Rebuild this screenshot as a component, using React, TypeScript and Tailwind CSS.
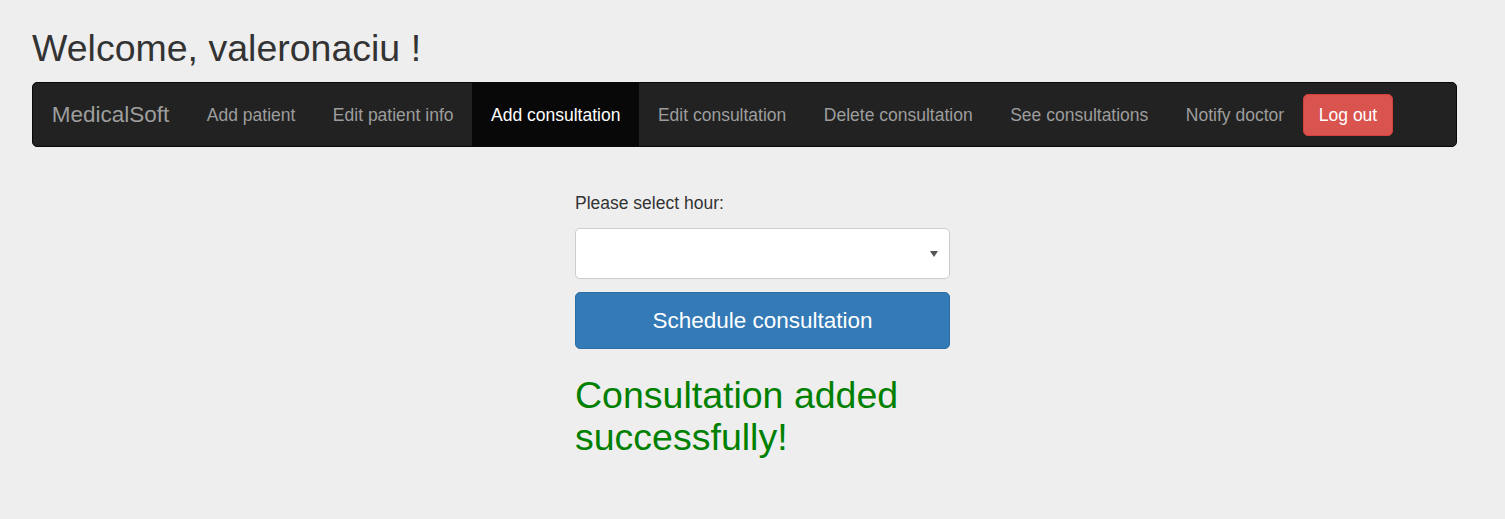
export default function App() {
  const links = [
    "Add patient",
    "Edit patient info",
    "Add consultation",
    "Edit consultation",
    "Delete consultation",
    "See consultations",
    "Notify doctor",
  ];

  return (
    <div className="min-h-screen bg-[#eeeeee] font-['Liberation_Sans',Arial,sans-serif] text-[#333333]">
      <div className="pl-[32px] pr-[48px] pt-[28px]">
        <h2 className="text-[37.5px] leading-[41.25px] font-normal">Welcome, valeronaciu !</h2>

        <nav className="mt-[13px] flex h-[65px] items-stretch rounded-[5px] border border-[#080808] bg-[#222222]">
          <span className="flex items-center px-[18.75px] text-[22.5px] text-[#9d9d9d]">MedicalSoft</span>
          {links.map((l) => (
            <a
              key={l}
              className={
                l === "Add consultation"
                  ? "flex items-center bg-[#080808] px-[18.75px] text-[17.5px] text-white"
                  : "flex items-center px-[18.75px] text-[17.5px] text-[#9d9d9d]"
              }
            >
              {l}
            </a>
          ))}
          <div className="flex items-center">
            <button className="h-[42px] rounded-[5px] border border-[#d43f3a] bg-[#d9534f] px-[15px] text-[17.5px] text-white">
              Log out
            </button>
          </div>
        </nav>

        <div className="ml-[543px] w-[375px] pt-[44px]">
          <label className="block text-[17.5px] leading-[25px]">Please select hour:</label>
          <div className="mt-[12px] flex h-[51px] items-center justify-end rounded-[5px] border border-[#cccccc] bg-white pr-[11px]">
            <svg width="8" height="6" viewBox="0 0 8 6">
              <path d="M0 0 H8 L4 6 Z" fill="#555555" />
            </svg>
          </div>
          <button className="mt-[13px] h-[57px] w-full rounded-[5px] border border-[#2e6da4] bg-[#337ab7] text-[22.5px] text-white">
            Schedule consultation
          </button>
          <h2 className="mt-[26px] text-[37.5px] leading-[41.25px] font-normal text-[#008000]">
            Consultation added successfully!
          </h2>
        </div>
      </div>
    </div>
  );
}
